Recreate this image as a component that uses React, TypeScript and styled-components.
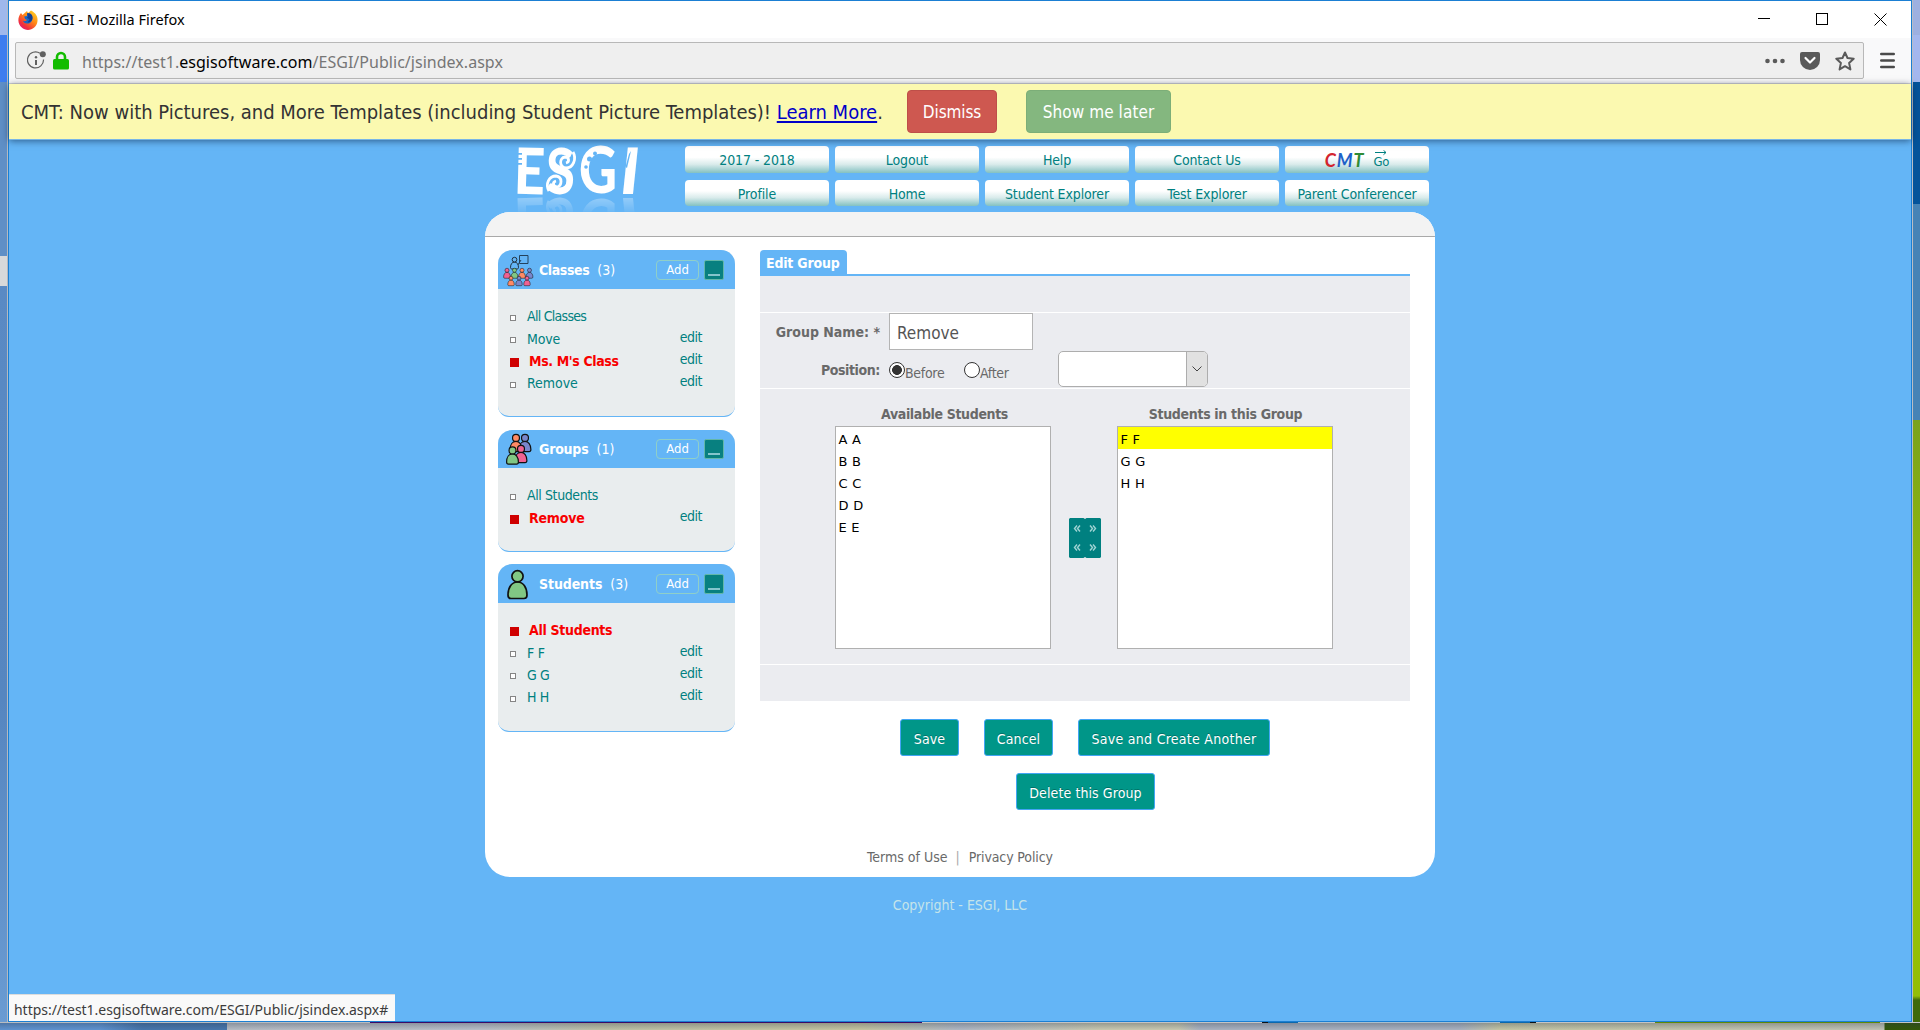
import React from 'react';
import styled, { createGlobalStyle, css } from 'styled-components';

const UI = `"DejaVu Sans Condensed", "DejaVu Sans", sans-serif`;
const SYS = `"Noto Sans", "Open Sans", sans-serif`;
const BLUE = '#64b5f6';
const TEAL = '#008080';

const Global = createGlobalStyle`
  *, *::before, *::after { box-sizing: border-box; }
  body { margin: 0; overflow: hidden; font-family: ${UI}; font-size: 14px; }
  button, input { font-family: inherit; margin: 0; }
`;

/* ---------- desktop and window frame ---------- */

const Desktop = styled.div`
  display: grid;
  grid-template-columns: 8px 1904px 8px;
  grid-template-rows: 1022px 8px;
  width: 1920px;
  height: 1030px;
  overflow: hidden;
`;

const LeftEdge = styled.div`
  border-right: 1px solid #b5b9bf;
  background: linear-gradient(
    #9fb8ec 0 35px, #3d7def 35px 82px, #5f8fc6 82px 256px,
    #d8d9da 256px 286px, #5a8ac4 286px, #5686c0 700px, #6a9bd2 100%
  );
`;

const RightEdge = styled.div`
  border-left: 1px solid #b9bdc4;
  background: linear-gradient(
    #9db0e0 0 35px, #a3b7ee 35px 82px, #04539a 82px 204px,
    #4683b6 204px 420px, #7aa21c 420px, #a0c800 700px, #93bd06 996px, #3f6a08 1000px 100%
  );
`;

const BottomEdge = styled.div`
  grid-column: 1 / -1;
  background:
    linear-gradient(
      90deg, #b9bcc0 0 370px, #3b0a66 370px 922px, #c4c4c4 922px 1262px, #0c1218 1262px 1268px,
      #0b68ac 1268px 1298px, #a9bfcd 1298px 1500px, #0b68ac 1500px 1530px, #0c1218 1530px 1536px,
      #c4c4c4 1536px 1655px, #5e8a06 1655px 1880px, #c4c4c4 1880px
    ) 0 0 / 100% 1px no-repeat,
    linear-gradient(rgba(40, 50, 70, 0.35), rgba(40, 50, 70, 0)),
    linear-gradient(
      90deg, #5f93d0 0 100px, #4676ac 142px, #4676ac 227px, #b6bcc4 227px, #b8bec8 480px,
      #bcc0a6 600px, #c4c4a0 860px, #b0b8c4 960px, #c8c8b0 1100px 1178px, #a9b2c0 1200px 1460px,
      #c4c6a4 1500px, #c0c2b4 1884px, #33580a 1885px 100%
    );
`;

const Window = styled.div`
  display: flex;
  flex-direction: column;
  border: 1px solid #1b7fd3;
  background: ${BLUE};
`;

const TitleBar = styled.header`
  display: flex;
  align-items: center;
  height: 37px;
  padding: 0 24px 0 9px;
  background: #fff;
`;

const WindowTitle = styled.span`
  flex: 1;
  margin: -2px 0 0 5px;
  font: 14.5px/20px ${SYS};
  color: #000;
`;

const WindowControls = styled.div`
  display: flex;
  gap: 45px;
`;

const Toolbar = styled.div`
  display: flex;
  align-items: center;
  height: 46px;
  padding: 0 0 0 6px;
  background: #f9f9fa;
  border-bottom: 1px solid #d5d5d8;
`;

const AddressBox = styled.div`
  display: flex;
  align-items: center;
  width: 1849px;
  height: 37px;
  padding: 0 8px 0 11px;
  border: 1px solid #b8b8b8;
  border-radius: 2px;
  background: #efefef;
`;

const IdentityIcons = styled.span`
  display: flex;
  align-items: center;
  gap: 6px;
`;

const Url = styled.span`
  flex: 1;
  margin: 2px 0 0 13px;
  font: 16px/22px ${SYS};
  letter-spacing: 0.03px;
  color: #767676;
  b { font-weight: 400; color: #000; }
`;

const AddressActions = styled.div`
  display: flex;
  align-items: center;
  gap: 15px;
`;

const MenuIcon = styled.svg`
  margin-left: 16px;
`;

/* ---------- notice banner ---------- */

const Banner = styled.div`
  position: relative;
  z-index: 1;
  display: flex;
  align-items: center;
  height: 56px;
  padding-left: 12px;
  background: #fbf9b0;
  border-bottom: 1px solid #78b6e6;
  box-shadow: 0 1px 7px rgba(0, 20, 50, 0.55);
  font-size: 20px;
  color: #333;
  white-space: nowrap;
`;

const BannerText = styled.span`
  width: 886px;
  letter-spacing: -0.01px;
  a { color: #0000c8; text-decoration: underline; text-underline-offset: 2px; }
`;

const BannerButton = styled.button<{ $tone: 'danger' | 'success' }>`
  height: 43px;
  width: ${p => (p.$tone === 'danger' ? 90 : 145)}px;
  margin-right: ${p => (p.$tone === 'danger' ? 29 : 0)}px;
  padding: 0;
  border: 1px solid ${p => (p.$tone === 'danger' ? '#be4f49' : '#7cae78')};
  border-radius: 4px;
  background: ${p => (p.$tone === 'danger' ? '#ce5850' : '#84b77f')};
  color: #fff;
  font-size: 17px;
  letter-spacing: ${p => (p.$tone === 'danger' ? -0.1 : 0.08)}px;
`;

/* ---------- page header ---------- */

const Page = styled.div`
  display: flex;
  flex-direction: column;
  width: 950px;
  margin-left: 476px;
`;

const PageHeader = styled.div`
  display: flex;
  height: 72px;
  padding-left: 30px;
`;

const LogoSlot = styled.div`
  width: 170px;
  height: 72px;
  padding-top: 6px;
`;

const LogoDrawing = styled.svg`
  display: block;
  overflow: visible;
  -webkit-box-reflect: below 0 linear-gradient(transparent 62%, rgba(255, 255, 255, 0.34));
`;

const Nav = styled.nav`
  display: grid;
  grid-template-columns: repeat(5, 144px);
  grid-template-rows: 27px 26px;
  gap: 7px 6px;
  margin-top: 6px;
  align-content: start;
`;

const NavLink = styled.a<{ $lower?: boolean }>`
  display: flex;
  align-items: center;
  justify-content: center;
  padding-top: ${p => (p.$lower ? 2 : 0)}px;
  border-radius: 4px;
  background: linear-gradient(#fff 0 42%, #d9ebeb 68%, #83c1c1 100%);
  color: ${TEAL};
  letter-spacing: -0.12px;
  line-height: 24px;
`;

const CmtWord = styled.span`
  display: flex;
  margin-right: 9px;
  font: italic 700 18px/22px Lato, sans-serif;
  letter-spacing: 0.9px;
  i:nth-child(1) { color: #d3242f; }
  i:nth-child(2) { color: #1d62c8; }
  i:nth-child(3) { color: #2f8b35; }
`;

const GoWord = styled.span`
  display: flex;
  flex-direction: column;
  align-items: center;
  font-size: 13px;
  line-height: 14px;
  margin-top: -1px;
  svg { display: block; margin-bottom: -1px; }
`;

/* ---------- main card ---------- */

const Card = styled.main`
  position: relative;
  z-index: 1;
  display: flex;
  flex-direction: column;
  height: 665px;
  border-radius: 25px;
  overflow: hidden;
  background: #fff;
`;

const CardStrip = styled.div`
  height: 25px;
  background: #f3f3f3;
  border-bottom: 1px solid #a9a9a9;
`;

const CardBody = styled.div`
  display: flex;
  flex: 1;
  gap: 25px;
  padding: 13px 25px 0 13px;
`;

const Sidebar = styled.aside`
  display: flex;
  flex-direction: column;
  width: 237px;
`;

const Panel = styled.section<{ $h: number; $gap?: number }>`
  display: flex;
  flex-direction: column;
  height: ${p => p.$h}px;
  margin-bottom: ${p => p.$gap ?? 0}px;
  border-radius: 14px 14px 11px 11px;
  border-bottom: 1px solid ${BLUE};
  overflow: hidden;
  background: #e9edee;
`;

const PanelHead = styled.div<{ $h: number }>`
  display: flex;
  align-items: center;
  height: ${p => p.$h}px;
  padding: 0 11px 0 4px;
  background: ${BLUE};
  color: #fff;
`;

const PanelIcon = styled.svg`
  width: 32px;
  height: 34px;
  margin-right: 5px;
`;

const PanelTitle = styled.span<{ $ls: number }>`
  flex: 1;
  line-height: 20px;
  b { letter-spacing: ${p => p.$ls}px; margin-right: 8px; }
`;

const AddButton = styled.button`
  width: 43px;
  height: 20px;
  padding: 0;
  border: 1px solid #8fcfc8;
  border-radius: 4px;
  background: transparent;
  color: #fff;
  font-size: 13px;
  line-height: 18px;
`;

const CollapseButton = styled.span`
  display: flex;
  align-items: flex-end;
  justify-content: center;
  width: 20px;
  height: 20px;
  margin-left: 5px;
  padding-bottom: 3px;
  border: 1px solid #62b7a9;
  border-radius: 2px;
  background: #088080;
  &::after { content: ''; width: 12px; height: 2px; background: #84c5cc; }
`;

const ItemList = styled.ul`
  margin: 0;
  padding: 16px 33px 0 12px;
  list-style: none;
`;

const Item = styled.li`
  display: flex;
  align-items: center;
  height: 22.4px;
  line-height: 22px;
  color: ${TEAL};
`;

const Bullet = styled.i<{ $on?: boolean }>`
  ${p => p.$on
    ? css`width: 9px; height: 9px; margin: 3px 10px 0 0; background: #cf0000;`
    : css`width: 6px; height: 6px; margin: 3px 11px 0 0; background: #fff; border: 1px solid #858585;`}
`;

const ItemName = styled.span<{ $on?: boolean; $ls: number }>`
  flex: 1;
  letter-spacing: ${p => p.$ls}px;
  ${p => p.$on && css`font-weight: 700; color: #f80000;`}
`;

const EditLink = styled.a`
  height: 22px;
  margin-top: -4px;
  letter-spacing: -0.5px;
`;

/* ---------- form ---------- */

const Editor = styled.div`
  width: 650px;
`;

const TabRow = styled.div`
  display: flex;
  height: 26px;
  border-bottom: 2px solid ${BLUE};
`;

const Tab = styled.span`
  width: 87px;
  height: 24px;
  padding-left: 6px;
  border-radius: 4px 4px 0 0;
  background: ${BLUE};
  color: #fff;
  font-weight: 700;
  letter-spacing: -0.2px;
  line-height: 26px;
`;

const Band = styled.div<{ $h: number }>`
  height: ${p => p.$h}px;
  background: #ebecf0;
  & + & { border-top: 1px solid #fff; }
`;

const FormRow = styled.div<{ $h: number }>`
  display: flex;
  align-items: center;
  height: ${p => p.$h}px;
  color: #696969;
`;

const Label = styled.label<{ $ls?: number; $drop?: number }>`
  width: 120px;
  margin-right: 9px;
  padding-top: ${p => p.$drop ?? 0}px;
  font-weight: 700;
  text-align: right;
  letter-spacing: ${p => p.$ls ?? 0}px;
`;

const NameInput = styled.input`
  width: 144px;
  height: 37px;
  padding: 2px 8px 0 7px;
  border: 1px solid #b4b4b4;
  background: #fff;
  color: #555;
  font-size: 17px;
  outline: 0;
`;

const Radio = styled.i<{ $on?: boolean }>`
  width: 16px;
  height: 16px;
  margin-top: 1px;
  border: 1px solid #333;
  border-radius: 50%;
  background: ${p => (p.$on ? 'radial-gradient(circle, #333 0 4.6px, #fff 5.2px)' : '#fff')};
`;

const RadioText = styled.span<{ $w: number }>`
  width: ${p => p.$w}px;
  padding-top: 8px;
  letter-spacing: -0.3px;
`;

const Select = styled.div`
  display: flex;
  justify-content: flex-end;
  width: 150px;
  height: 36px;
  border: 1px solid #adadad;
  border-radius: 5px;
  overflow: hidden;
  background: #fff;
`;

const SelectArrow = styled.span`
  display: flex;
  align-items: center;
  justify-content: center;
  width: 21px;
  border-left: 1px solid #adadad;
  background: #e1e1e1;
`;

const Transfer = styled.div`
  display: flex;
  align-items: flex-start;
  padding: 16px 0 0 75px;
`;

const ListColumn = styled.div`
  width: 216px;
`;

const ListHeading = styled.div<{ $ls: number; $shift?: number }>`
  height: 21px;
  padding-left: ${p => p.$shift ?? 0}px;
  color: #696969;
  font-weight: 700;
  letter-spacing: ${p => p.$ls}px;
  line-height: 18px;
  text-align: center;
`;

const ListBox = styled.div`
  height: 223px;
  border: 1px solid #b0b0b0;
  background: #fff;
`;

const Option = styled.div<{ $on?: boolean }>`
  height: 22px;
  padding: 0 3px 0 2.500px;
  background: ${p => (p.$on ? '#ffff00' : 'transparent')};
  color: #000;
  font: 13px/25px "DejaVu Sans", sans-serif;
  letter-spacing: 0.25px;
`;

const Mover = styled.svg`
  display: block;
  margin: 113px 16px 0 18px;
`;

const Actions = styled.div`
  display: flex;
  justify-content: center;
`;

const ActionButton = styled.button<{ $w: number; $ls?: number }>`
  width: ${p => p.$w}px;
  height: 37px;
  padding: 3px 0 0;
  border: 1px solid #42a5f5;
  border-radius: 3px;
  background: #009688;
  color: #fff;
  font-size: 14px;
  letter-spacing: ${p => p.$ls ?? 0.1}px;
  text-shadow: 0 -1px 0 rgba(0, 0, 0, 0.25);
`;

const MainActions = styled(Actions)`
  gap: 25px;
  padding-top: 18px;
`;

const DeleteActions = styled(Actions)`
  padding: 17px 0 0 1px;
`;

const CardFooter = styled.footer`
  display: flex;
  height: 40px;
  padding-left: 382px;
  color: #696969;
  line-height: 41px;
  i { margin: 0 9px 0 8px; font-style: normal; color: #a9a9a9; }
`;

const Policy = styled.span`
  letter-spacing: -0.12px;
`;

const Copyright = styled.div`
  padding-top: 17px;
  color: #c4e4ea;
  line-height: 22px;
  text-align: center;
`;

const StatusBar = styled.div`
  width: 386px;
  height: 27px;
  margin: auto 0 0;
  padding-left: 5px;
  border-top: 1px solid #dcdcdc;
  background: #f9f9f9;
  color: #3c3c3c;
  font: 14px/30px ${SYS};
  letter-spacing: -0.03px;
  white-space: nowrap;
`;

/* ---------- drawings ---------- */

const FirefoxIcon = () => (
  <svg width="20" height="20" viewBox="0 0 20 20">
    <defs>
      <linearGradient id="fx" x1="1" y1="0" x2="0.2" y2="1">
        <stop offset="0" stopColor="#ffe226" />
        <stop offset="0.45" stopColor="#ff8a16" />
        <stop offset="0.8" stopColor="#f0303c" />
        <stop offset="1" stopColor="#e0187a" />
      </linearGradient>
    </defs>
    <path fill="url(#fx)" d="M3 3l1.500 2L9 1l1 2 3-2.500C18 3 20 7 19.500 11 19 16.500 14.500 20 10 20S.5 16 .4 10.500C.3 7 1.500 5 3 3z" />
    <path fill="#1667c4" d="M9 3.500c3-.8 5.500 1.200 5.500 4.500 0 3.500-2.500 5.800-5.500 5.600-2-.1-3.600-1.300-4-2.800 1.500.7 3 .5 4.200-.7L7 9 6.200 6.500 9 6z" />
    <path fill="#123f92" d="M9 3.500l1 2.700-1 1.600 2.500 1.600-2 3c3 .3 5-2 5-4.900C14.500 4.500 12 2.700 9 3.500z" />
  </svg>
);

const InfoIcon = () => (
  <svg width="20" height="20" viewBox="0 0 20 20" fill="none" stroke="#606060">
    <path d="M13 2.300A8 8 0 1 0 16.500 8.500" strokeWidth="1.200" />
    <path d="M9 9v5" strokeWidth="2" />
    <circle cx="9" cy="6.300" r="1.200" fill="#606060" stroke="none" />
    <circle cx="15.800" cy="3.200" r="3" fill="#606060" stroke="none" />
  </svg>
);

const LockIcon = () => (
  <svg width="16" height="19" viewBox="0 0 16 19">
    <path d="M4 9V6a4 4 0 0 1 8 0v3" fill="none" stroke="#12bc00" strokeWidth="2.600" />
    <rect x="0" y="8" width="16" height="10.500" rx="1.500" fill="#12bc00" />
  </svg>
);

const Logo = () => (
  <LogoDrawing width="135" height="50" viewBox="5 0 135 50" aria-label="ESGI">
    <g fill="#fff" fontFamily="Lato, sans-serif" fontWeight="900" fontSize="64">
      <text x="4" y="48" textLength="31" lengthAdjust="spacingAndGlyphs" transform="rotate(1.500 18 25)">E</text>
      <text x="36" y="48" textLength="29" lengthAdjust="spacingAndGlyphs" fontWeight="700">S</text>
      <text x="69" y="47" textLength="38" lengthAdjust="spacingAndGlyphs">G</text>
      <text x="109" y="48" textLength="20" lengthAdjust="spacingAndGlyphs" transform="translate(4 0) skewX(-6)">I</text>
    </g>
    <g fill="none" stroke="#fff" strokeWidth="2.800">
      <path d="M63 6c4 7 0 16-7 16-7-1-7-10-1-11 4 0 5 5 1 6" />
      <path d="M39 45c-4-7 0-15 7-15 7 1 6 10 1 11-4 0-5-5-1-6" />
    </g>
    <g fill={BLUE}>
      <circle cx="85" cy="7.500" r="2" />
      <circle cx="79.500" cy="13" r="2.500" />
      <circle cx="76" cy="21" r="1.800" />
      <path d="M6 7h6v1.800H6zM6 12h6v1.800H6zM6 17h6v1.800H6z" />
      <path d="M119 8l2-3-4 17-1.500-1z" />
    </g>
  </LogoDrawing>
);

const Person = ({ x, y, s, fill, w = 1 }: { x: number; y: number; s: number; fill: string; w?: number }) => (
  <g transform={`translate(${x} ${y}) scale(${s})`} fill={fill} stroke="#111" strokeWidth={w / s}>
    <path d="M-9.500 25c0-8 4-13 9.500-13S9.500 17 9.500 25c0 2.500-1.500 3.500-3 3.500h-13c-1.500 0-3-1-3-3.500z" />
    <circle cx="0" cy="6.300" r="5.600" />
  </g>
);

const ClassesIcon = () => (
  <PanelIcon viewBox="0 0 32 34">
    <path d="M17.500 2.500h8.500v8h-8.500zM19 7l-4.500 7" fill="none" stroke="#24425c" />
    <Person x={12.500} y={4} s={0.42} fill="#64b5f6" w={0.800} />
    {['#f06292', '#81c784', '#ff8a65', '#7986cb'].map((c, i) => (
      <Person key={c} x={5 + i * 7.500} y={15} s={0.36} fill={c} w={0.500} />
    ))}
    <Person x={9} y={23} s={0.34} fill="#ff8a65" w={0.500} />
    <Person x={17} y={23} s={0.34} fill="#7986cb" w={0.500} />
    <Person x={25} y={23} s={0.34} fill="#f06292" w={0.500} />
  </PanelIcon>
);

const GroupsIcon = () => (
  <PanelIcon viewBox="0 0 32 34">
    <Person x={23} y={2} s={0.62} fill="#7986cb" w={1.200} />
    <Person x={14} y={2} s={0.62} fill="#ff8a65" w={1.200} />
    <Person x={19} y={13} s={0.62} fill="#f06292" w={1.200} />
    <Person x={10.500} y={14.500} s={0.62} fill="#81c784" w={1.200} />
  </PanelIcon>
);

const StudentsIcon = () => (
  <PanelIcon viewBox="0 0 32 34">
    <Person x={15.500} y={3} s={1} fill="#81c784" w={1.700} />
  </PanelIcon>
);

/* ---------- data-driven parts ---------- */

type Entry = { name: string; ls: number; on?: boolean; edit?: boolean };

type SidePanelProps = {
  title: string; count: number; ls: number; height: number; head: number; gap?: number;
  icon: React.ReactNode; items: Entry[];
};

const SidePanel = ({ title, count, ls, height, head, gap, icon, items }: SidePanelProps) => (
  <Panel $h={height} $gap={gap}>
    <PanelHead $h={head}>
      {icon}
      <PanelTitle $ls={ls}><b>{title}</b>({count})</PanelTitle>
      <AddButton>Add</AddButton>
      <CollapseButton />
    </PanelHead>
    <ItemList>
      {items.map(it => (
        <Item key={it.name}>
          <Bullet $on={it.on} />
          <ItemName $on={it.on} $ls={it.ls}>{it.name}</ItemName>
          {it.edit && <EditLink>edit</EditLink>}
        </Item>
      ))}
    </ItemList>
  </Panel>
);

const navTop = ['2017 - 2018', 'Logout', 'Help', 'Contact Us'];
const navBottom = ['Profile', 'Home', 'Student Explorer', 'Test Explorer', 'Parent Conferencer'];

export default function App() {
  return (
    <>
      <Global />
      <Desktop>
        <LeftEdge />
        <Window>
          <TitleBar>
            <FirefoxIcon />
            <WindowTitle>ESGI - Mozilla Firefox</WindowTitle>
            <WindowControls>
              <svg width="13" height="14"><path d="M0 5.500h12" stroke="#000" /></svg>
              <svg width="13" height="14"><rect x="0.500" y="0.500" width="11" height="11" fill="none" stroke="#000" /></svg>
              <svg width="13" height="14"><path d="M.5 .5l12 12M12.500 .5l-12 12" stroke="#000" /></svg>
            </WindowControls>
          </TitleBar>
          <Toolbar>
            <AddressBox>
              <IdentityIcons>
                <InfoIcon />
                <LockIcon />
              </IdentityIcons>
              <Url>https://test1.<b>esgisoftware.com</b>/ESGI/Public/jsindex.aspx</Url>
              <AddressActions>
                <svg width="20" height="6" fill="#5a5a5a"><circle cx="2.500" cy="3" r="2.300" /><circle cx="10" cy="3" r="2.300" /><circle cx="17.500" cy="3" r="2.300" /></svg>
                <svg width="20" height="18" viewBox="0 0 20 18"><path d="M2 0h16a2 2 0 0 1 2 2v6a10 10 0 0 1-20 0V2a2 2 0 0 1 2-2z" fill="#5a5a5a" /><path d="M5.500 6l4.500 4.500L14.500 6" fill="none" stroke="#fff" strokeWidth="2.200" strokeLinecap="round" strokeLinejoin="round" /></svg>
                <svg width="20" height="20" viewBox="0 0 20 20"><path d="M10 1.500l2.500 5.500 6.200.7-4.600 4.200 1.300 6.500L10 15.200l-5.400 3.200 1.300-6.500L1.300 7.700 7.500 7z" fill="none" stroke="#5a5a5a" strokeWidth="2" strokeLinejoin="round" /></svg>
              </AddressActions>
            </AddressBox>
            <MenuIcon width="15" height="17" stroke="#4a4a4a" strokeWidth="2.400" strokeLinecap="round"><path d="M1.200 2h12.600M1.200 8.500h12.600M1.200 15h12.600" /></MenuIcon>
          </Toolbar>
          <Banner>
            <BannerText>CMT: Now with Pictures, and More Templates (including Student Picture Templates)! <a>Learn More</a>.</BannerText>
            <BannerButton $tone="danger">Dismiss</BannerButton>
            <BannerButton $tone="success">Show me later</BannerButton>
          </Banner>

          <Page>
            <PageHeader>
              <LogoSlot><Logo /></LogoSlot>
              <Nav>
                {navTop.map(n => <NavLink key={n}>{n}</NavLink>)}
                <NavLink>
                  <CmtWord><i>C</i><i>M</i><i>T</i></CmtWord>
                  <GoWord>
                    <svg width="12" height="6" fill="none" stroke={TEAL}><path d="M0 2.500h11M8.500 .3L11 2.500 8.500 4.700" /></svg>
                    Go
                  </GoWord>
                </NavLink>
                {navBottom.map(n => <NavLink key={n} $lower>{n}</NavLink>)}
              </Nav>
            </PageHeader>

            <Card>
              <CardStrip />
              <CardBody>
                <Sidebar>
                  <SidePanel title="Classes" count={3} ls={-0.4} height={167} head={39} gap={13} icon={<ClassesIcon />}
                    items={[
                      { name: 'All Classes', ls: -0.72 },
                      { name: 'Move', ls: -0.2, edit: true },
                      { name: "Ms. M's Class", ls: -0.38, on: true, edit: true },
                      { name: 'Remove', ls: -0.05, edit: true },
                    ]} />
                  <SidePanel title="Groups" count={1} ls={-0.2} height={122} head={38} gap={12} icon={<GroupsIcon />}
                    items={[
                      { name: 'All Students', ls: -0.4 },
                      { name: 'Remove', ls: -0.2, on: true, edit: true },
                    ]} />
                  <SidePanel title="Students" count={3} ls={-0.1} height={168} head={39} icon={<StudentsIcon />}
                    items={[
                      { name: 'All Students', ls: -0.3, on: true },
                      { name: 'F F', ls: -0.2, edit: true },
                      { name: 'G G', ls: -0.4, edit: true },
                      { name: 'H H', ls: -0.3, edit: true },
                    ]} />
                </Sidebar>

                <Editor>
                  <TabRow><Tab>Edit Group</Tab></TabRow>
                  <Band $h={36} />
                  <Band $h={76}>
                    <FormRow $h={37}>
                      <Label>Group Name: *</Label>
                      <NameInput defaultValue="Remove" />
                    </FormRow>
                    <FormRow $h={38}>
                      <Label $ls={-0.4} $drop={2}>Position:</Label>
                      <Radio $on /><RadioText $w={59}>Before</RadioText>
                      <Radio /><RadioText $w={78}>After</RadioText>
                      <Select>
                        <SelectArrow>
                          <svg width="10" height="6" fill="none" stroke="#444"><path d="M.5 .5L5 5 9.500 .5" /></svg>
                        </SelectArrow>
                      </Select>
                    </FormRow>
                  </Band>
                  <Band $h={276}>
                    <Transfer>
                      <ListColumn>
                        <ListHeading $ls={-0.36} $shift={3}>Available Students</ListHeading>
                        <ListBox>
                          {['A A', 'B B', 'C C', 'D D', 'E E'].map(n => <Option key={n}>{n}</Option>)}
                        </ListBox>
                      </ListColumn>
                      <Mover width="32" height="41" viewBox="0 0 32 41">
                        <path fill={TEAL} d="M1 0h13.500l1.500 1 1.500-1H31l1 1v38l-1 1H17.500L16 39l-1.500 1H1l-1-1V1z" />
                        <g fill="none" stroke="#9fd3d3" strokeWidth="1.400">
                          {[10.500, 29.500].map(y => (
                            <path key={y} d={`M8 ${y - 3}l-2.500 3 2.500 3M11 ${y - 3}l-2.500 3 2.500 3M21 ${y - 3}l2.500 3-2.500 3M24 ${y - 3}l2.500 3-2.500 3`} />
                          ))}
                        </g>
                      </Mover>
                      <ListColumn>
                        <ListHeading $ls={-0.32} $shift={1}>Students in this Group</ListHeading>
                        <ListBox>
                          <Option $on>F F</Option>
                          <Option>G G</Option>
                          <Option>H H</Option>
                        </ListBox>
                      </ListColumn>
                    </Transfer>
                  </Band>
                  <Band $h={37} />
                  <MainActions>
                    <ActionButton $w={59}>Save</ActionButton>
                    <ActionButton $w={69}>Cancel</ActionButton>
                    <ActionButton $w={192} $ls={0.27}>Save and Create Another</ActionButton>
                  </MainActions>
                  <DeleteActions>
                    <ActionButton $w={139}>Delete this Group</ActionButton>
                  </DeleteActions>
                </Editor>
              </CardBody>
              <CardFooter>
                <span>Terms of Use</span><i>|</i><Policy>Privacy Policy</Policy>
              </CardFooter>
            </Card>
            <Copyright>Copyright - ESGI, LLC</Copyright>
          </Page>
          <StatusBar>https://test1.esgisoftware.com/ESGI/Public/jsindex.aspx#</StatusBar>
        </Window>
        <RightEdge />
        <BottomEdge />
      </Desktop>
    </>
  );
}
